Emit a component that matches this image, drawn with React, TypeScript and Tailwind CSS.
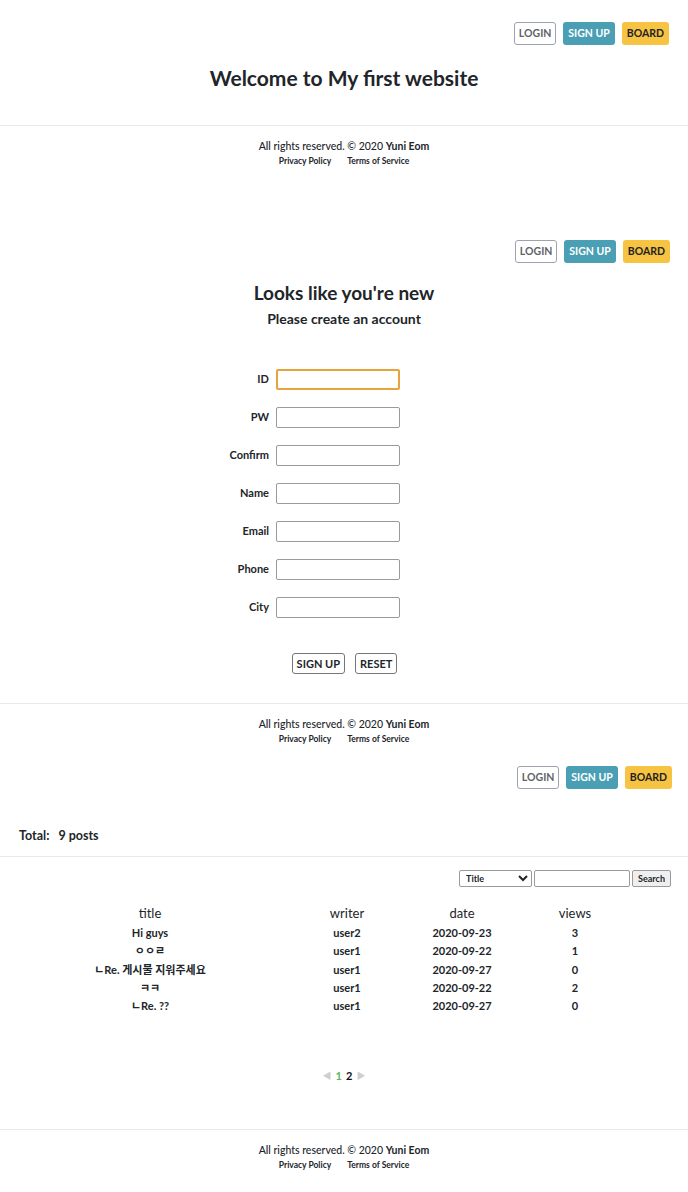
import React from "react";

const font = { fontFamily: 'Lato, "Noto Sans CJK KR", sans-serif' };

function Header({ pt, pr }: { pt: string; pr: string }) {
  return (
    <div className={`flex justify-end gap-[7px] ${pt} ${pr}`}>
      <button className="h-[23px] px-[4px] rounded-[3px] border border-[#9ca3af] bg-white text-[10.5px] font-bold text-[#5f6368] leading-none">
        LOGIN
      </button>
      <button className="h-[23px] px-[5px] rounded-[3px] bg-[#4a9fb5] text-[10.5px] font-bold text-white leading-none">
        SIGN UP
      </button>
      <button className="h-[23px] px-[5px] rounded-[3px] bg-[#f6c343] text-[10.5px] font-bold text-[#222] leading-none">
        BOARD
      </button>
    </div>
  );
}

function Footer() {
  return (
    <div className="flex flex-col items-center text-[#212529]">
      <div className="text-[10.5px] leading-[14px] font-medium">
        All rights reserved. © 2020 <span className="font-bold">Yuni Eom</span>
      </div>
      <div className="flex gap-[16px] text-[8.5px] font-bold leading-[14px] mt-[1px]">
        <span>Privacy Policy</span>
        <span>Terms of Service</span>
      </div>
    </div>
  );
}

const fields = ["ID", "PW", "Confirm", "Name", "Email", "Phone", "City"];

const rows = [
  { t: "Hi guys", w: "user2", d: "2020-09-23", v: "3" },
  { t: "ㅇㅇㄹ", w: "user1", d: "2020-09-22", v: "1" },
  { t: "ㄴRe. 게시물 지워주세요", w: "user1", d: "2020-09-27", v: "0" },
  { t: "ㅋㅋ", w: "user1", d: "2020-09-22", v: "2" },
  { t: "ㄴRe. ??", w: "user1", d: "2020-09-27", v: "0" },
];

export default function App() {
  return (
    <div className="w-[688px] bg-white text-[#212529]" style={font}>
      {/* Section 1 */}
      <Header pt="pt-[22px]" pr="pr-[19px]" />
      <h1 className="text-center text-[21px] font-bold leading-[30px] mt-[18px]">
        Welcome to My first website
      </h1>
      <div className="h-px bg-[#e9e9e9] mt-[32px]" />
      <div className="mt-[13px]">
        <Footer />
      </div>

      {/* Section 2 */}
      <div className="h-[72px]" />
      <Header pt="pt-0" pr="pr-[18px]" />
      <h2 className="text-center text-[19px] font-bold leading-[26px] mt-[17px]">
        Looks like you're new
      </h2>
      <div className="text-center text-[14px] font-bold leading-[20px] mt-[3px]">
        Please create an account
      </div>
      <div className="flex flex-col gap-[17px] mt-[40px]">
        {fields.map((f, i) => (
          <div key={f} className="flex items-center">
            <label className="w-[276px] pr-[7px] text-right text-[11px] font-bold">{f}</label>
            <input
              className={`w-[124px] h-[21px] rounded-[2px] bg-white ${
                i === 0 ? "border-2 border-[#e8a33a]" : "border border-[#9a9a9a]"
              }`}
            />
          </div>
        ))}
      </div>
      <div className="flex justify-center gap-[10px] mt-[35px] pl-[1px]">
        <button className="h-[21px] px-[4px] rounded-[3px] border border-[#767676] bg-white text-[11px] font-bold leading-none">
          SIGN UP
        </button>
        <button className="h-[21px] px-[4px] rounded-[3px] border border-[#767676] bg-white text-[11px] font-bold leading-none">
          RESET
        </button>
      </div>
      <div className="h-px bg-[#e9e9e9] mt-[29px]" />
      <div className="mt-[13px]">
        <Footer />
      </div>

      {/* Section 3 */}
      <Header pt="pt-[20px]" pr="pr-[16px]" />
      <div className="pl-[19px] mt-[38px] text-[12.5px] font-bold leading-[18px]">
        Total:<span className="ml-[9px]">9 posts</span>
      </div>
      <div className="h-px bg-[#e9e9e9] mt-[11px]" />
      <div className="flex justify-end pr-[17px] mt-[13px] gap-[2px]">
        <select className="w-[73px] h-[17px] border border-[#9a9a9a] rounded-[2px] text-[9px] font-bold bg-white px-[2px]">
          <option>Title</option>
        </select>
        <input className="w-[96px] h-[17px] border border-[#9a9a9a] rounded-[2px] bg-white" />
        <button className="h-[17px] px-[5px] border border-[#9a9a9a] rounded-[2px] bg-[#efefef] text-[9px] font-bold leading-none">
          Search
        </button>
      </div>
      <div className="mt-[17px] pl-[20px]">
        <div className="grid grid-cols-[260px_134px_96px_130px] text-[13px] leading-[18px]">
          <div className="text-center">title</div>
          <div className="text-center">writer</div>
          <div className="text-center">date</div>
          <div className="text-center">views</div>
        </div>
        <div className="mt-[2px]">
          {rows.map((r, i) => (
            <div
              key={i}
              className="grid grid-cols-[260px_134px_96px_130px] text-[11px] leading-[18.25px] font-bold"
            >
              <div className="text-center">{r.t}</div>
              <div className="text-center">{r.w}</div>
              <div className="text-center">{r.d}</div>
              <div className="text-center">{r.v}</div>
            </div>
          ))}
        </div>
      </div>
      <div className="flex justify-center items-center gap-[4px] mt-[53px] text-[11px] font-bold leading-[16px]">
        <span className="text-[#cfcfcf] text-[9px]">◀</span>
        <span className="text-[#5cb85c]">1</span>
        <span className="text-[#111]">2</span>
        <span className="text-[#cfcfcf] text-[9px]">▶</span>
      </div>
      <div className="h-px bg-[#e9e9e9] mt-[45px]" />
      <div className="mt-[13px] pb-[20px]">
        <Footer />
      </div>
    </div>
  );
}
